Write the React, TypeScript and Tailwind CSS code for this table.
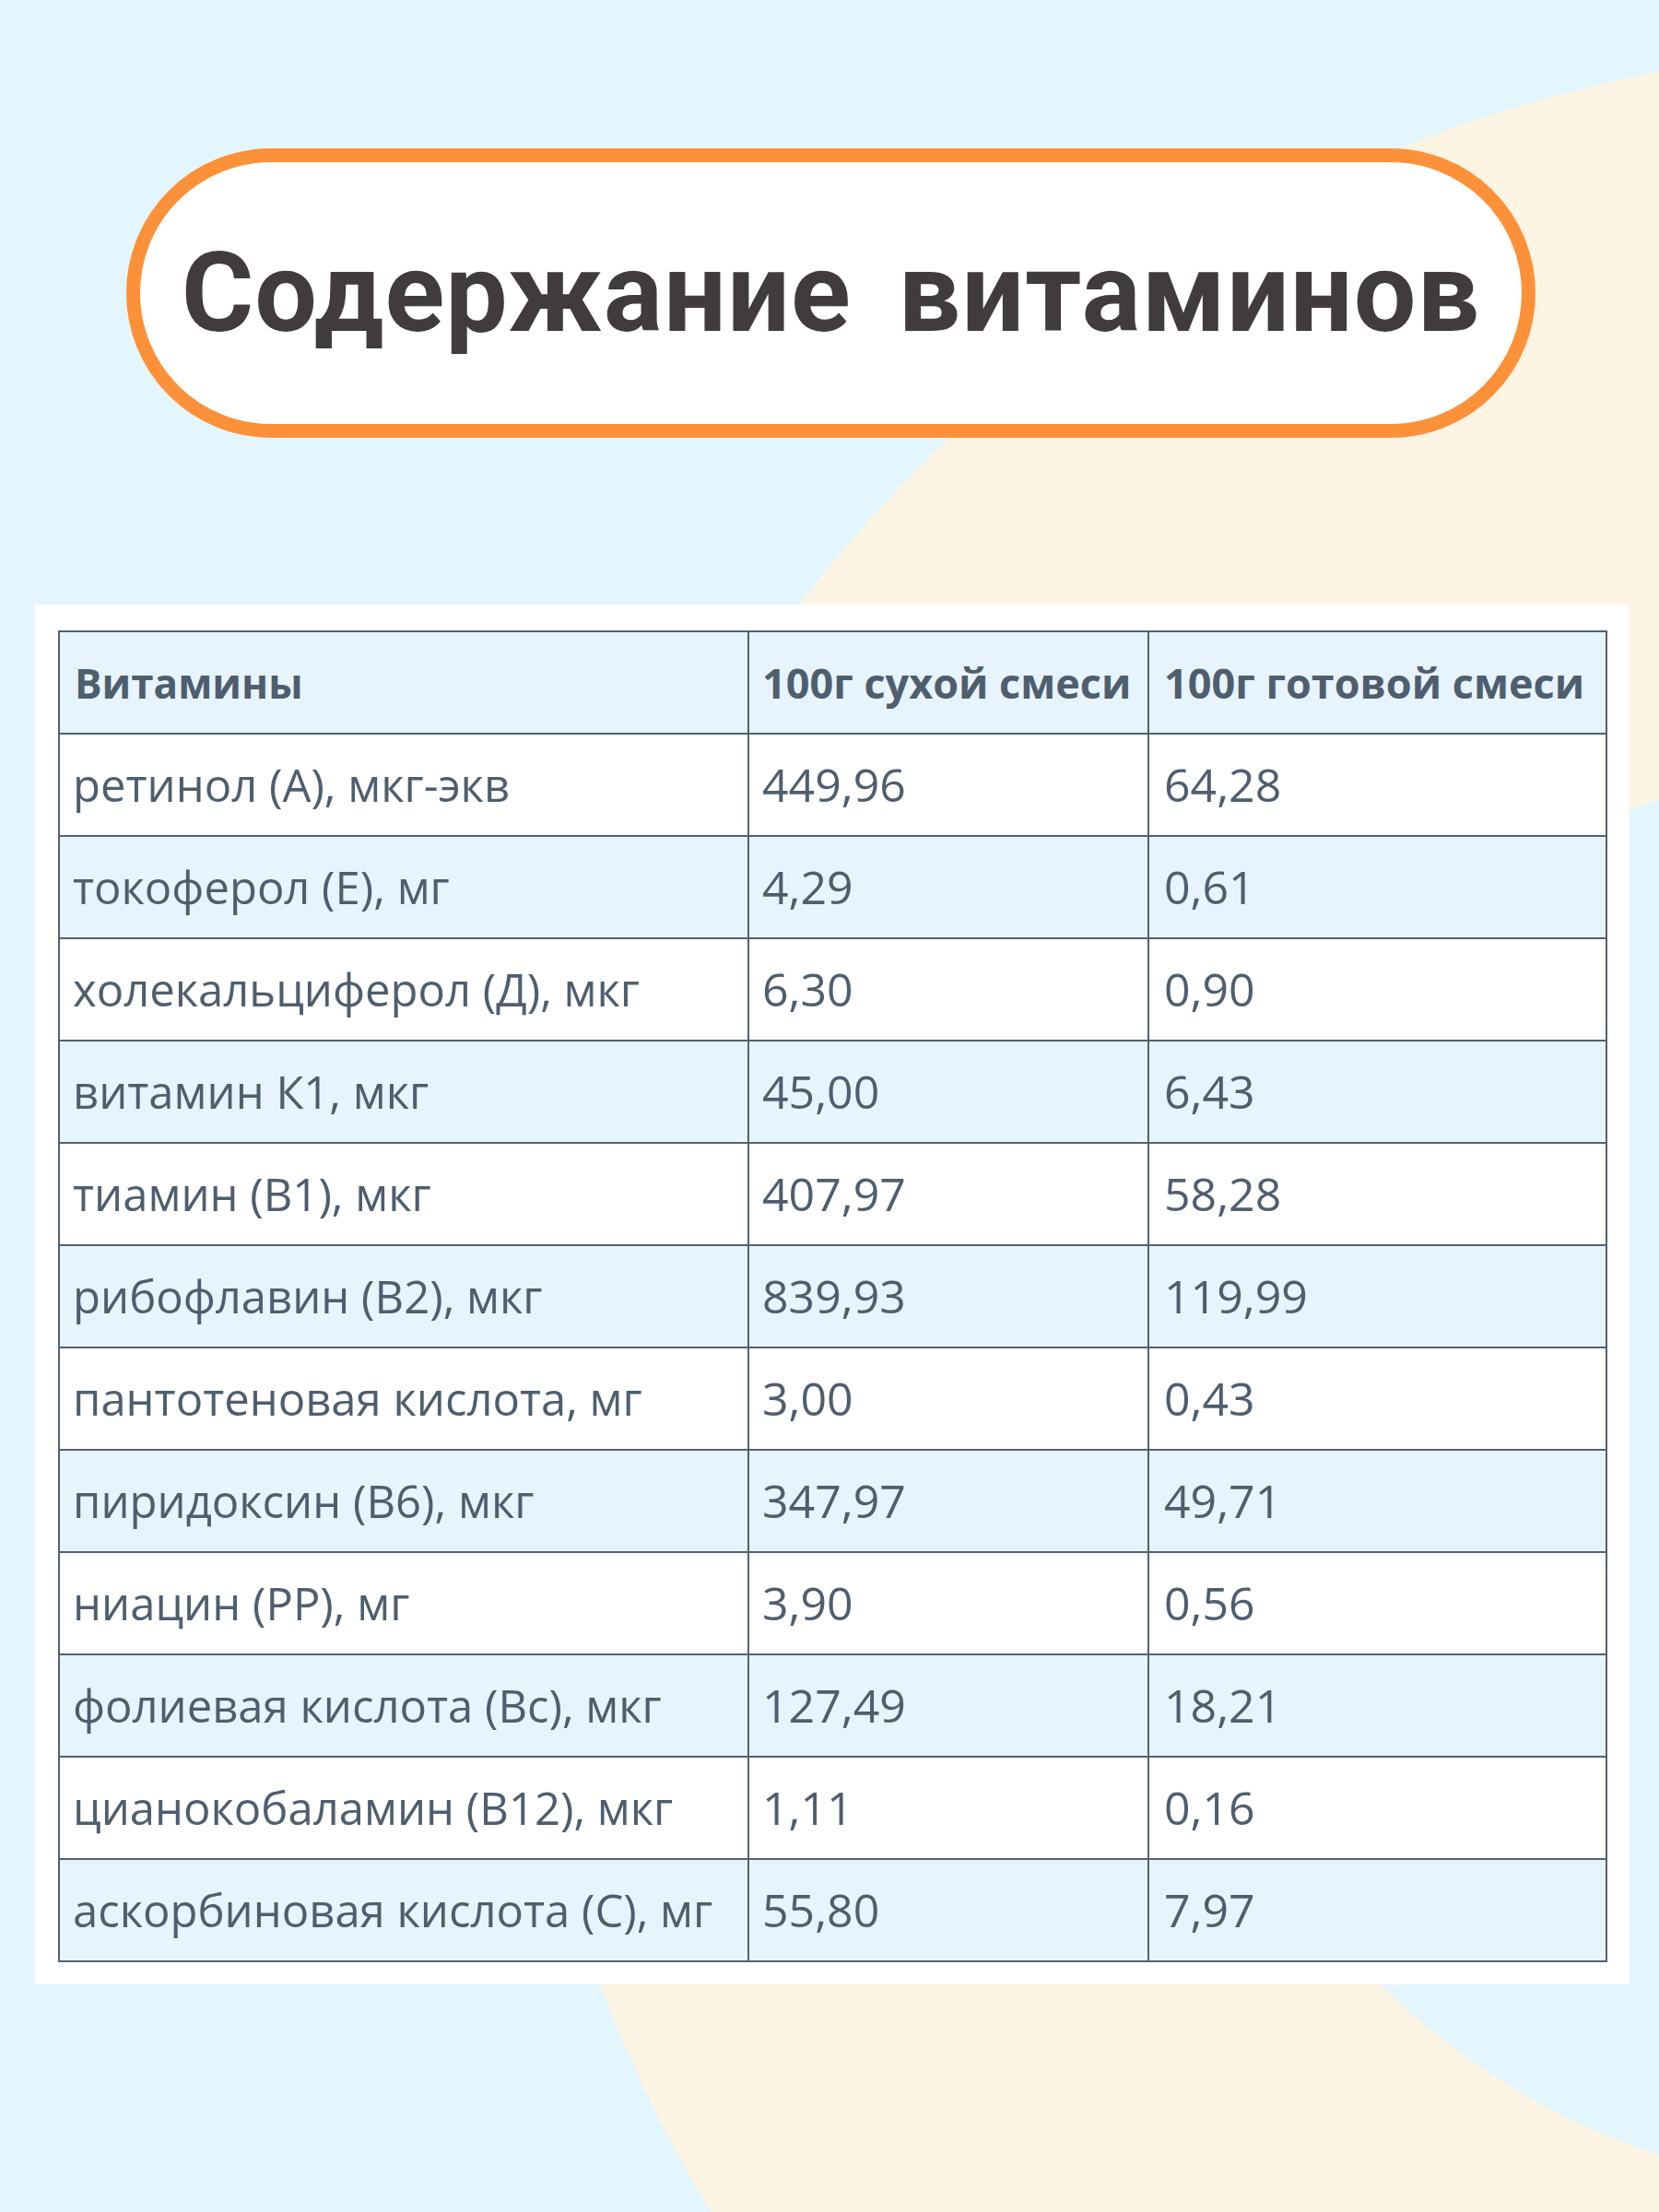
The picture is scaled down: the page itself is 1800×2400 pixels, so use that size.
import React from 'react'

const rows: [string, string, string][] = [
  ['ретинол (А), мкг-экв', '449,96', '64,28'],
  ['токоферол (Е), мг', '4,29', '0,61'],
  ['холекальциферол (Д), мкг', '6,30', '0,90'],
  ['витамин К1, мкг', '45,00', '6,43'],
  ['тиамин (В1), мкг', '407,97', '58,28'],
  ['рибофлавин (В2), мкг', '839,93', '119,99'],
  ['пантотеновая кислота, мг', '3,00', '0,43'],
  ['пиридоксин (В6), мкг', '347,97', '49,71'],
  ['ниацин (РР), мг', '3,90', '0,56'],
  ['фолиевая кислота (Вс), мкг', '127,49', '18,21'],
  ['цианокобаламин (В12), мкг', '1,11', '0,16'],
  ['аскорбиновая кислота (С), мг', '55,80', '7,97'],
]

function Backdrop() {
  return (
    <svg
      className="absolute inset-0 h-full w-full"
      viewBox="0 0 1800 2400"
      aria-hidden="true"
    >
      <circle cx="2097" cy="1598" r="1549" fill="#fdf4e3" />
      <circle cx="2042" cy="1603" r="774" fill="#e4f6fd" />
    </svg>
  )
}

export default function App() {
  return (
    <div className="relative h-[2400px] w-[1800px] overflow-hidden bg-[#e4f6fd] font-['Open_Sans',sans-serif]">
      <Backdrop />
      <div className="relative flex flex-col">
        <div className="ml-[137px] mt-[161px] flex h-[314px] w-[1529px] items-center justify-center rounded-full border-[15px] border-[#fd913a] bg-white">
          <h1 className="whitespace-nowrap font-['Roboto',sans-serif] text-[120px] font-bold leading-none tracking-[1px] text-[#403b3c] [word-spacing:20px]">
            Содержание витаминов
          </h1>
        </div>

        <div className="ml-[38px] mt-[181px] w-[1730px] bg-white pb-[24px] pl-[25px] pr-[26px] pt-[28px]">
          <table className="w-[1679px] table-fixed border-collapse text-[#4f5e6e]">
            <colgroup>
              <col className="w-[748px]" />
              <col className="w-[434px]" />
              <col className="w-[497px]" />
            </colgroup>
            <thead>
              <tr className="h-[111px] bg-[#e7f3fd]">
                <th className="border-2 border-[#526274] px-[16px] text-left text-[44px] font-bold">Витамины</th>
                <th className="border-2 border-[#526274] px-[14px] text-left text-[45px] font-bold">100г сухой смеси</th>
                <th className="border-2 border-[#526274] px-[16px] text-left text-[45px] font-bold">100г готовой смеси</th>
              </tr>
            </thead>
            <tbody>
              {rows.map((r, i) => (
                <tr key={r[0]} className={i % 2 === 0 ? 'h-[111px] bg-white' : 'h-[111px] bg-[#e7f3fd]'}>
                  <td className="border-2 border-[#526274] px-[14px] text-[49px]">{r[0]}</td>
                  <td className="border-2 border-[#526274] px-[14px] text-[50px]">{r[1]}</td>
                  <td className="border-2 border-[#526274] px-[16px] text-[50px]">{r[2]}</td>
                </tr>
              ))}
            </tbody>
          </table>
        </div>
      </div>
    </div>
  )
}
